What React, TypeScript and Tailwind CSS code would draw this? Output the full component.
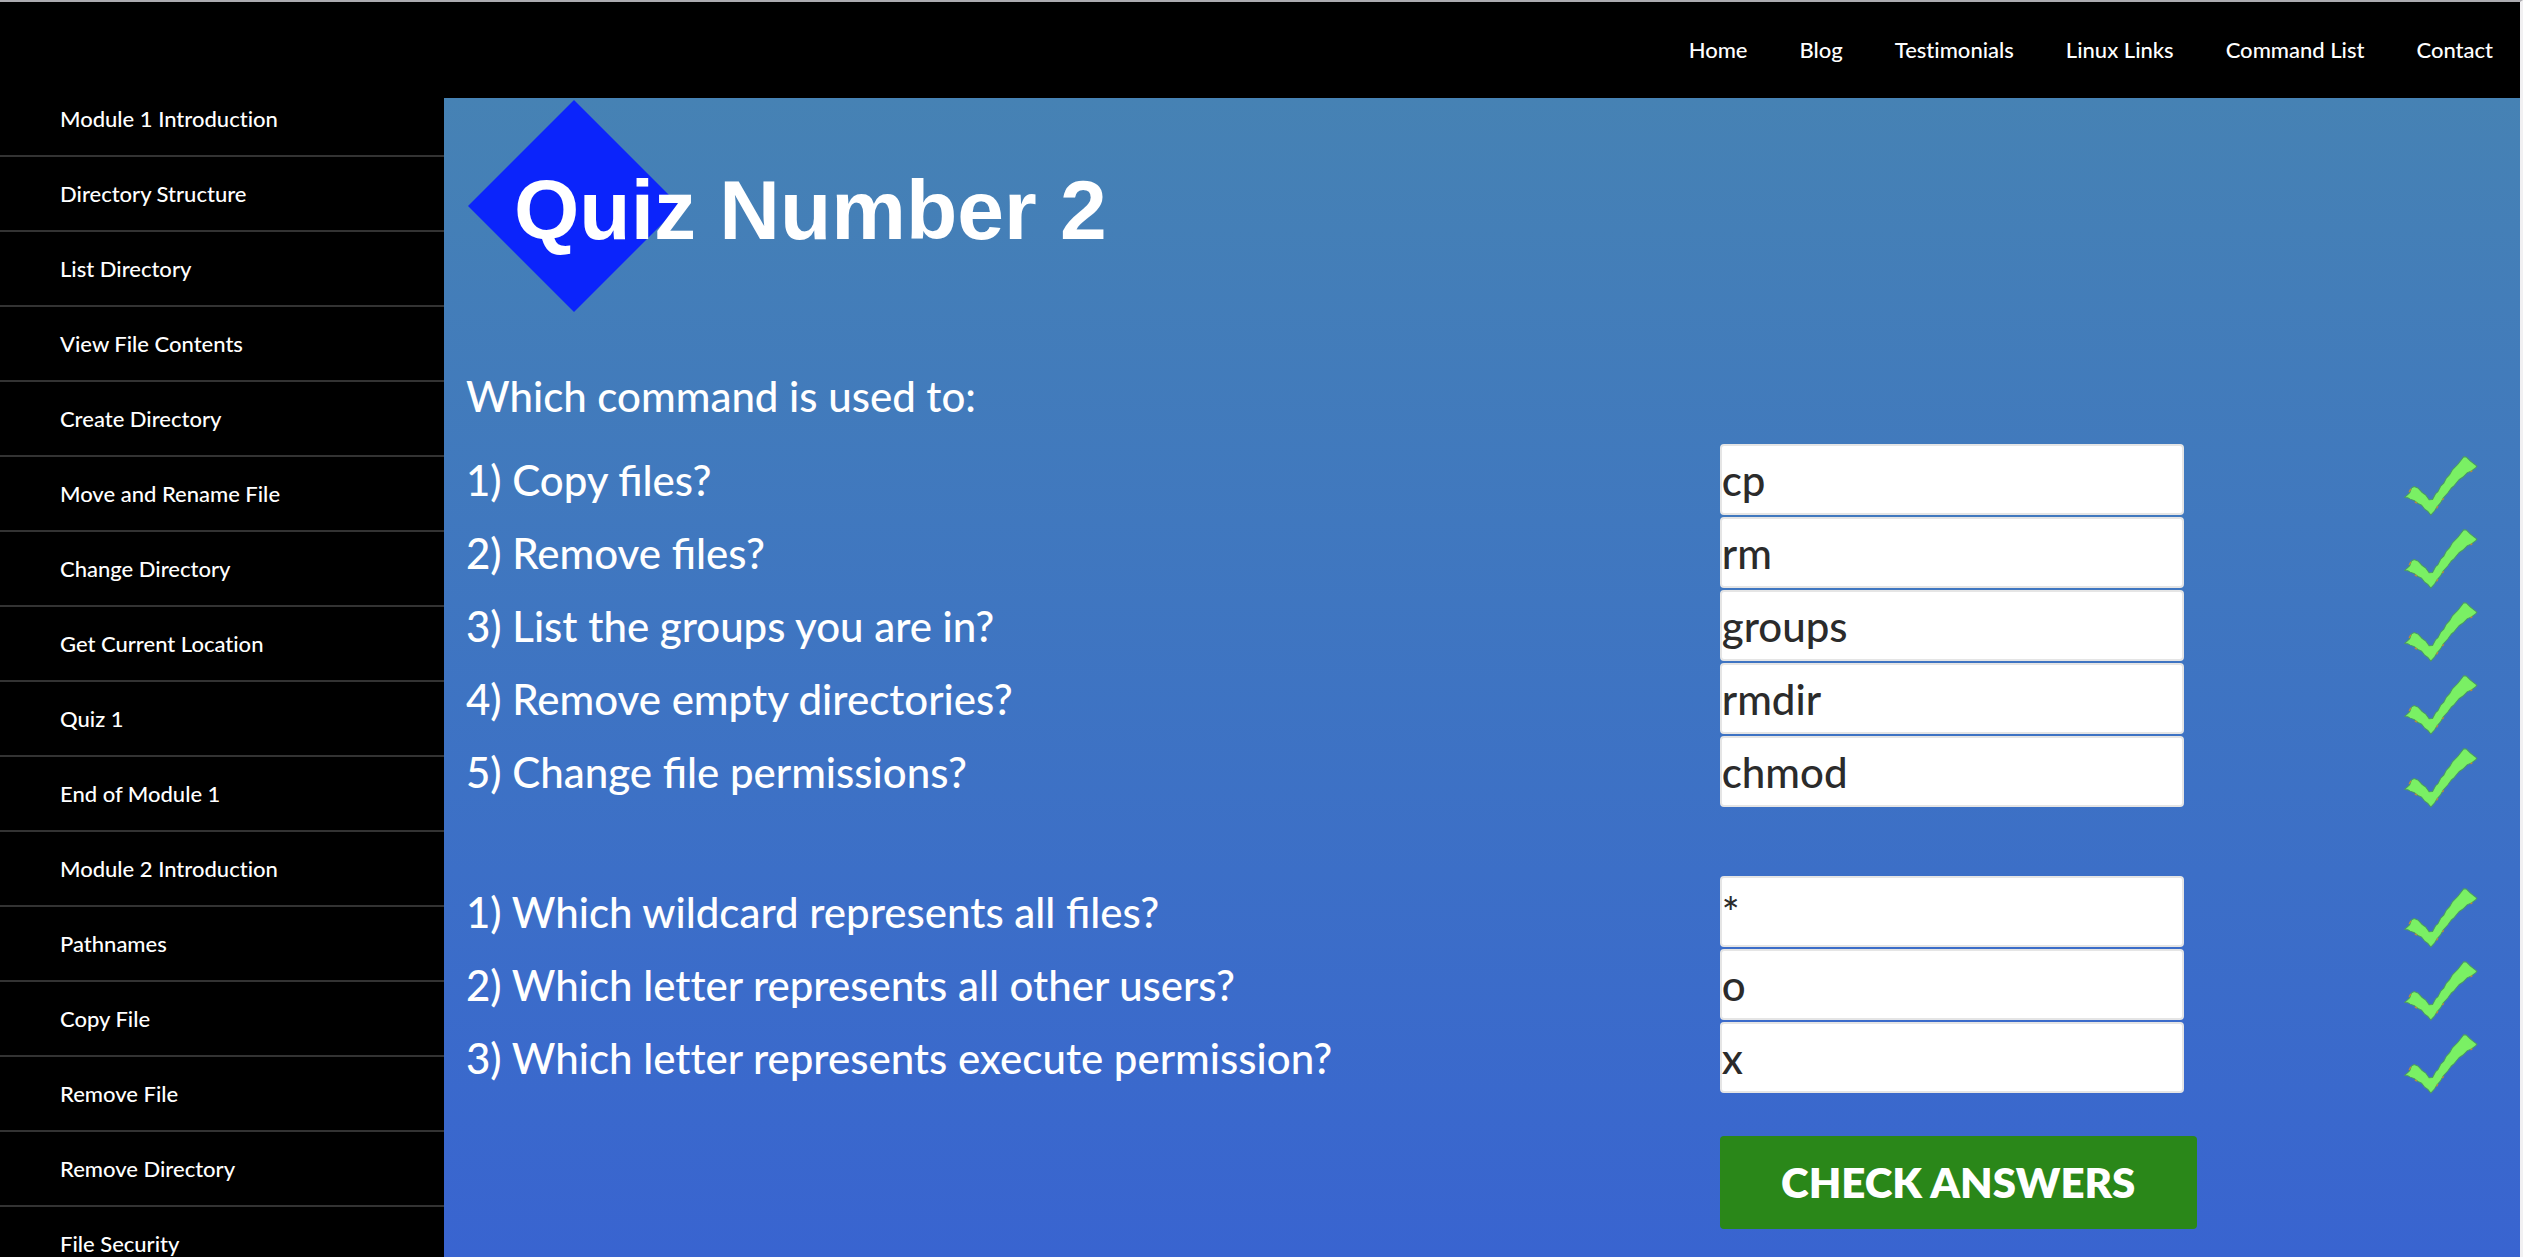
const navLinks = ["Home", "Blog", "Testimonials", "Linux Links", "Command List", "Contact"];

const lessons = [
  "Module 1 Introduction",
  "Directory Structure",
  "List Directory",
  "View File Contents",
  "Create Directory",
  "Move and Rename File",
  "Change Directory",
  "Get Current Location",
  "Quiz 1",
  "End of Module 1",
  "Module 2 Introduction",
  "Pathnames",
  "Copy File",
  "Remove File",
  "Remove Directory",
  "File Security",
];

type Question = { id: string; label: string; answer: string };

const commandQuestions: Question[] = [
  { id: "copy", label: "1) Copy files?", answer: "cp" },
  { id: "remove", label: "2) Remove files?", answer: "rm" },
  { id: "groups", label: "3) List the groups you are in?", answer: "groups" },
  { id: "rmdir", label: "4) Remove empty directories?", answer: "rmdir" },
  { id: "chmod", label: "5) Change file permissions?", answer: "chmod" },
];

const symbolQuestions: Question[] = [
  { id: "wildcard", label: "1) Which wildcard represents all files?", answer: "*" },
  { id: "others", label: "2) Which letter represents all other users?", answer: "o" },
  { id: "execute", label: "3) Which letter represents execute permission?", answer: "x" },
];

function Tick() {
  return (
    <svg viewBox="0 0 218 177" className="mt-3 w-[74px]" role="img" aria-label="Correct">
      <path
        d="M2 122 L17 108 L22 94 L30 90 L41 94 L54 108 L64 115 L74 129 L84 128 L93 111 L100 105 L108 89 L117 80 L124 66 L135 54 L143 40 L158 25 L176 2 L184 3 L196 15 L215 30 L211 35 L199 44 L187 49 L174 62 L162 70 L148 87 L139 95 L129 109 L115 125 L107 139 L98 149 L90 162 L79 174 L70 163 L61 157 L52 145 L41 140 L31 132 L18 127 L11 123 Z"
        fill="#7af064"
        stroke="#4a9a62"
        strokeWidth="3"
        strokeLinejoin="round"
      />
      <path d="M15 106 L20 97 M32 135 L38 139 M96 154 L100 148 M113 130 L117 125 M196 47 L201 43" stroke="#b98a3c" strokeWidth="4" />
    </svg>
  );
}

function QuestionRow({ id, label, answer }: Question) {
  // Only the "fi" ligature is wanted; Lato would also join "tt" and "ti".
  const ligatures = label.includes("fi") ? "" : "[font-variant-ligatures:none]";
  return (
    <li className="grid h-[71px] grid-cols-[1255fr_685fr_92fr]">
      <label htmlFor={id} className={`text-[42px] leading-[72px] font-medium ${ligatures}`}>
        {label}
      </label>
      <input
        id={id}
        type="text"
        defaultValue={answer}
        className="h-[71px] w-[464px] rounded-[4px] border-2 border-[#e5e5e5] bg-white text-[42px] font-medium text-[#2b2b2b] outline-none"
      />
      <Tick />
    </li>
  );
}

export default function App() {
  return (
    <div className="flex h-screen flex-col overflow-hidden border-t-2 border-r-3 border-t-[#acabb0] border-r-[#f1f0f2] bg-black font-['Lato',sans-serif] text-white">
      <header className="relative z-10 flex h-24 shrink-0 items-center justify-end bg-black">
        <nav className="flex gap-[52px] pr-[27px] pb-[2px] text-[22px] font-medium [font-variant-ligatures:none]">
          {navLinks.map((link) => (
            <a key={link} href="#">
              {link}
            </a>
          ))}
        </nav>
      </header>
      <div className="flex min-h-0 grow">
        <aside className="w-[444px] shrink-0">
          <ul className="-mt-4 text-[22px] font-medium [font-variant-ligatures:none]">
            {lessons.map((lesson) => (
              <li key={lesson} className="h-[75px] border-b-2 border-[#333333]">
                <a href="#" className="block pl-[60px] leading-[73px]">
                  {lesson}
                </a>
              </li>
            ))}
          </ul>
        </aside>
        <main className="grow bg-linear-to-b from-[#4682b4] to-[#3964d0] pr-6 pl-[22px]">
          <div className="relative mt-[2px] ml-[2px] flex h-[212px] items-center">
            <svg viewBox="0 0 212 212" className="absolute top-0 left-0 w-[212px]" aria-hidden="true">
              <polygon points="106,0 212,106 106,212 0,106" fill="#0b24fb" />
            </svg>
            <h1 className="relative pt-2 pl-[46px] font-['Liberation_Sans',sans-serif] text-[84px] font-bold">
              Quiz Number 2
            </h1>
          </div>
          <form>
            <p className="mt-[50px] mb-[14px] text-[42px] leading-[68px] font-medium">Which command is used to:</p>
            <ul className="flex flex-col gap-[2px]">
              {commandQuestions.map((question) => (
                <QuestionRow key={question.id} {...question} />
              ))}
            </ul>
            <ul className="mt-[69px] flex flex-col gap-[2px]">
              {symbolQuestions.map((question) => (
                <QuestionRow key={question.id} {...question} />
              ))}
            </ul>
            <div className="mt-[43px] grid grid-cols-[1255fr_777fr]">
              <button
                type="button"
                className="col-start-2 h-[93px] w-[477px] rounded-[4px] bg-[#2a8719] text-[42px] font-extrabold"
              >
                CHECK ANSWERS
              </button>
            </div>
          </form>
        </main>
      </div>
    </div>
  );
}
